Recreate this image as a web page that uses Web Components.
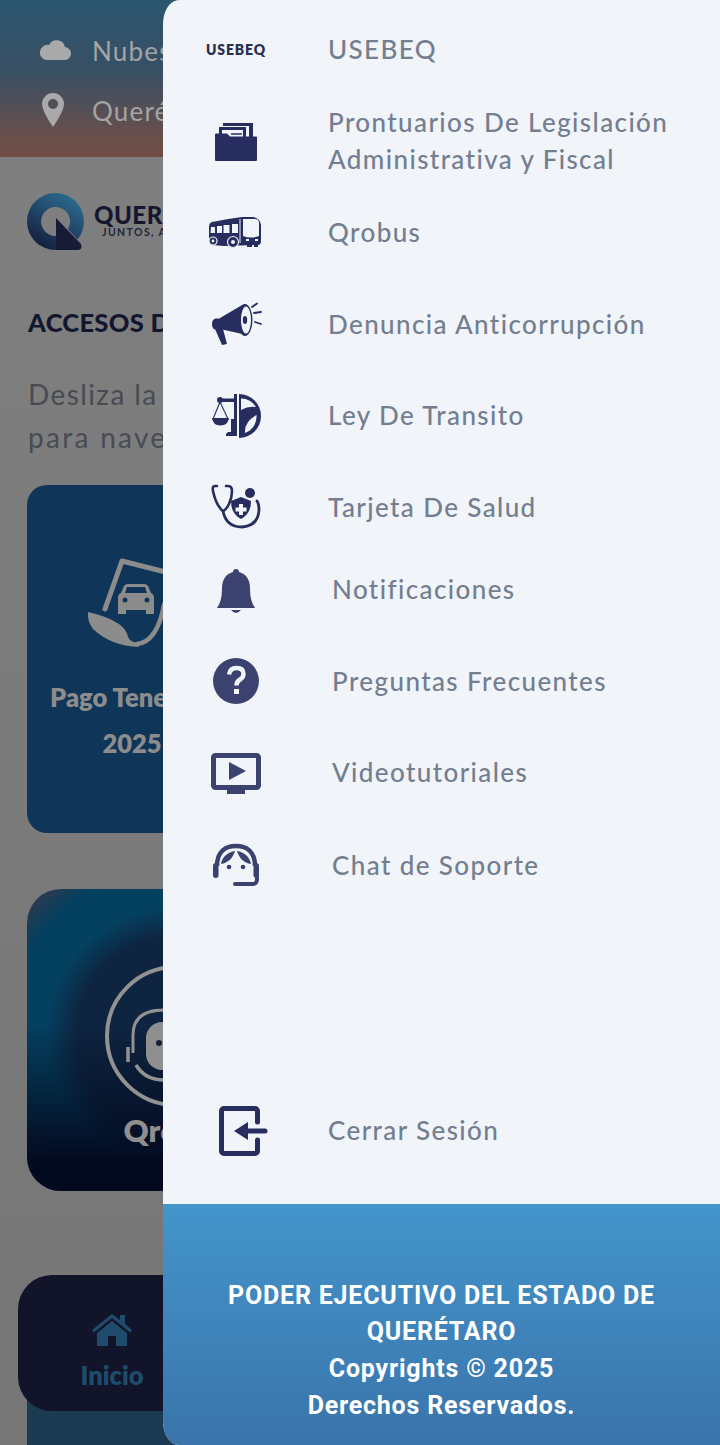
<!DOCTYPE html>
<html lang="es"><head><meta charset="utf-8"><title>Menú</title>
<style>
html,body{margin:0;padding:0}
body{width:720px;height:1445px;overflow:hidden;font-family:"Lato","Noto Sans",sans-serif;background:#7a7a7a}
</style></head><body>
<app-shell>
  <back-page></back-page>
  <side-drawer></side-drawer>
</app-shell>
<script>
const C1='#272e5f',C2='#3b4270',BG='#f1f4f9';
const icons={
folder:`<path d="M17 12h30v22h-4V15H21v5h-4z" fill="${C1}"/><path d="M12 15h28v14H12z" fill="${BG}"/><path d="M13 16h27v15h-3V19H16v4h-3z" fill="${C1}"/><path d="M25 23h11M26 27h9" stroke="${C1}" stroke-width="1.4"/><path d="M10 22.500h11l3 3h26a1 1 0 0 1 1 1V49a1 1 0 0 1-1 1H10a1 1 0 0 1-1-1V23.500a1 1 0 0 1 1-1z" fill="${C1}"/>`,
bus:`<path d="M6 19 Q20 16 36 14 L47 14 Q54 15 55 22 L55 38 Q55 42 52 42 L18 43 L6 42 Q3 41 3 38 L3 24 Q3 20 6 19z" fill="${C1}"/><path d="M5 24h4v6H4.500zM11 23h5v7h-5zM17.500 22h6v8h-6zM26 21h6v9h-6z" fill="${BG}"/><path d="M37 16h12q4 0 4 4v13q-8 3-16 0z" fill="${BG}"/><path d="M34 16v24" stroke="${BG}" stroke-width="1"/><circle cx="7" cy="38" r="4" fill="${C1}" stroke="${BG}" stroke-width="1.200"/><circle cx="7" cy="38" r="1.400" fill="${BG}"/><circle cx="27" cy="39" r="5.500" fill="${C1}" stroke="${BG}" stroke-width="1.200"/><circle cx="27" cy="39" r="2" fill="${BG}"/><path d="M40 36h3v2h-3zM49 36h3v2h-3z" fill="${BG}"/><path d="M41 42h5v2h-5zM48 42h4v2h-4z" fill="${C1}"/>`,
mega:`<path d="M14 24 L37 10.500 L41 41 L14 35z" fill="${C1}"/><path d="M6 30q0-5 4-5.500h4v11h-4q-4 0-4-5.500z" fill="${C1}"/><path d="M9 35h8l4 15-5 1z" fill="${C1}"/><ellipse cx="39" cy="26" rx="7.500" ry="16" fill="${C1}"/><ellipse cx="40" cy="26" rx="5" ry="13.500" fill="${BG}"/><ellipse cx="39" cy="26" rx="2.200" ry="4" fill="${C1}"/><path d="M46 13l5-3.500M48 19l7-1M49 28l6 2" stroke="${C1}" stroke-width="1.800" stroke-linecap="round"/>`,
ley:`<path d="M33 8A22 22 0 0 1 33 52z" fill="${C1}"/><path d="M35 12.500A17.500 17.500 0 0 1 50 21Q42 20 35 24z" fill="${BG}"/><path d="M50.500 29A17.500 17.500 0 0 1 39 47Q38 36 50.500 29z" fill="${BG}"/><path d="M28 8h3v42H20v-2l2-2h3V33h3z" fill="${C1}"/><path d="M14 12.500h14v3.500H14z" fill="${C1}"/><circle cx="14" cy="14" r="3" fill="${C1}"/><path d="M14 16L7 33M14 16l8 17" stroke="${C1}" stroke-width="1.100" fill="none"/><path d="M6 32h17q-1 7.500-8.500 7.500T6 32z" fill="${C1}"/>`,
salud:`<path d="M11 9H9Q6 9 7 14q2 9 5 14 4 6 5 6 3-1 6-7 3-6 3-13 0-5-4-5h-2" fill="none" stroke="${C1}" stroke-width="2.600" stroke-linecap="round"/><path d="M17 34q3 16 19 16 16-1 17-17 0-6-2-9" fill="none" stroke="${C1}" stroke-width="2.800" stroke-linecap="round"/><circle cx="44" cy="16" r="5" fill="${C1}"/><path d="M35 20l10 4q0 13-10 18-10-5-10-18z" fill="${C1}"/><path d="M33 27h4v3.500h3.500v4H37V38h-4v-3.500h-3.500v-4H33z" fill="${BG}"/>`,
bell:`<path d="M30 9a3 3 0 0 1 3 3q11 3 11 17 0 12 5 19H11q5-7 5-19 0-14 11-17a3 3 0 0 1 3-3z" fill="${C2}"/><path d="M25 50h10q-5 6-10 0z" fill="${C2}"/>`,
help:`<circle cx="30" cy="30" r="23" fill="${C2}"/><path d="M23 23.500q1-6.500 7.500-6.500 7 0 7 6 0 3.500-3.500 5.500-3.500 2-3.500 6" fill="none" stroke="${BG}" stroke-width="4.500"/><rect x="28" y="38" width="5" height="5" fill="${BG}"/>`,
video:`<rect x="7.500" y="12.500" width="45" height="32" rx="2" fill="none" stroke="${C2}" stroke-width="5"/><path d="M21 46h18v5H21z" fill="${C2}"/><path d="M23 19l17 9-17 9z" fill="${C2}"/>`,
chat:`<path d="M11 30C11 15 20 10 30 10s19 5 19 20" fill="none" stroke="${C2}" stroke-width="4.500"/><path d="M29 15C22 16 16 21 15 28 22 27 27 22 29 15zM31 15C38 16 44 21 45 28 38 27 33 22 31 15z" fill="${C2}"/><rect x="7" y="27" width="5.500" height="15" rx="2.700" fill="${C2}"/><rect x="47.500" y="27" width="5.500" height="15" rx="2.700" fill="${C2}"/><path d="M51 42v2a4 4 0 0 1-4 4H29" fill="none" stroke="${C2}" stroke-width="4" stroke-linecap="round"/><circle cx="23" cy="31" r="2.300" fill="${C2}"/><circle cx="37" cy="31" r="2.300" fill="${C2}"/>`,
exit:`<path d="M51.500 21V10a2.500 2.500 0 0 0-2.500-2.500H18A2.500 2.500 0 0 0 15.500 10v40a2.500 2.500 0 0 0 2.500 2.500h31a2.500 2.500 0 0 0 2.500-2.500V39" fill="none" stroke="${C1}" stroke-width="5" stroke-linecap="round"/><path d="M40 30h19" stroke="${C1}" stroke-width="5" stroke-linecap="round"/><path d="M28 30l14-9v18z" fill="${C1}"/>`
};
class MenuRow extends HTMLElement{
  connectedCallback(){
    const s=this.attachShadow({mode:'open'});
    const i=this.getAttribute('icon');
    s.innerHTML=`<style>
:host{display:flex;align-items:center;height:72px;padding-left:43px;color:#737e90;font:500 26px/37px "Lato","Noto Sans",sans-serif;letter-spacing:1.4px}
.ic{flex:none;width:60px;height:60px;display:flex;align-items:center;justify-content:center;margin-right:var(--text-gap,62px);font:800 14px "Lato",sans-serif;color:#2a3050;letter-spacing:.9px}
svg{display:block;width:60px;height:60px;overflow:visible}
.t{white-space:pre-line}
</style><div class="ic">${i==='logo'?'USEBEQ':`<svg viewBox="0 0 60 60">${icons[i]}</svg>`}</div><div class="t"><slot></slot></div>`;
  }
}
customElements.define('menu-row',MenuRow);
class SideDrawer extends HTMLElement{
  connectedCallback(){
    const s=this.attachShadow({mode:'open'});
    s.innerHTML=`<style>
:host{position:absolute;z-index:2;left:163px;top:0;width:557px;height:1445px;display:flex;flex-direction:column;background:${BG};border-radius:16px 0 0 16px / 24px 0 0 24px;overflow:hidden}
nav{display:flex;flex-direction:column;gap:19.500px;padding-top:13.500px}
.b{display:flex;flex-direction:column;gap:19.500px;margin-top:10.500px;--text-gap:66px}
.out{margin-top:auto;margin-bottom:37.500px}
.chat{margin-top:1.500px}
footer{height:241px;box-sizing:border-box;padding-top:73.500px;background:linear-gradient(#4395cc,#3a74aa);color:#fff;text-align:center;font:700 25px/36.700px Roboto,sans-serif;letter-spacing:.8px}
</style>
<nav>
<menu-row icon="logo">USEBEQ</menu-row>
<menu-row icon="folder">Prontuarios De Legislación
Administrativa y Fiscal</menu-row>
<menu-row icon="bus">Qrobus</menu-row>
<menu-row icon="mega">Denuncia Anticorrupción</menu-row>
<menu-row icon="ley">Ley De Transito</menu-row>
<menu-row icon="salud">Tarjeta De Salud</menu-row>
</nav>
<div class="b">
<menu-row icon="bell">Notificaciones</menu-row>
<menu-row icon="help">Preguntas Frecuentes</menu-row>
<menu-row icon="video">Videotutoriales</menu-row>
<menu-row class="chat" icon="chat">Chat de Soporte</menu-row>
</div>
<menu-row class="out" icon="exit">Cerrar Sesión</menu-row>
<footer>PODER EJECUTIVO DEL ESTADO DE<br>QUERÉTARO<br>Copyrights © 2025<br>Derechos Reservados.</footer>`;
  }
}
customElements.define('side-drawer',SideDrawer);
class BackPage extends HTMLElement{
  connectedCallback(){
    const s=this.attachShadow({mode:'open'});
    s.innerHTML=`<style>
:host{display:block;height:1445px;overflow:hidden;background:linear-gradient(#808080,#767676);font-family:"Lato",sans-serif;position:relative;z-index:0}
header{height:157px;box-sizing:border-box;padding-top:21px;background:linear-gradient(#2a566f 0%,#384f64 45%,#6a4f4b 88%,#734d45 100%);color:#a4a4a4;font-size:26px;letter-spacing:1.2px}
header div{display:flex;align-items:center;height:60px;padding-left:38px;gap:21px}
header svg{width:33px;height:40px;flex:none}
.logo{display:flex;align-items:center;gap:10px;margin:36px 0 0 27px;height:57px}
.logo svg{width:57px;height:57px;flex:none}
.logo>div{padding-bottom:3px}
.ln{color:#14172f;font:900 24px/23px "Lato",sans-serif;letter-spacing:.5px}
.tag{color:#22253c;font:700 10.500px/10px "Lato",sans-serif;letter-spacing:1.400px;margin:1px 0 0 8px}
h2{margin:57px 0 0 28px;font:900 25.500px/30px "Lato",sans-serif;letter-spacing:.3px;color:#13162f;white-space:nowrap}
p{margin:36px 0 0 28px;font:400 28px/43px "Lato",sans-serif;color:#484b53;letter-spacing:1.400px}
p span{letter-spacing:2.300px}
.c1{margin:26px 0 0 27px;width:210px;height:348px;border-radius:20px;background:#0f3558;color:#8c8c8c;text-align:center;font:800 25.500px/46px "Lato",sans-serif;box-sizing:border-box;padding-top:70px}
.c1 svg{display:block;width:100px;height:96px;margin:0 auto 23px 54px}
.c2{margin:56px 0 0 27px;width:297px;height:302px;border-radius:34px;box-sizing:border-box;padding-top:76px;text-align:center;color:#8f8f8f;font:800 31px/36px "Lato",sans-serif;
 background:radial-gradient(circle at 148px 147px,#0e2440 0 98px,#04405f 128px,#04405f 168px,#2b3a50 195px);position:relative;overflow:hidden}
.c2::after{content:"";position:absolute;inset:0;background:linear-gradient(transparent 45%,#030a20 90%)}
.c2 svg{display:block;width:142px;height:142px;margin:0 auto 5px}
.c2 span,.c2 svg{position:relative;z-index:1}
.c3{margin:87px 0 0 27px;width:500px;height:200px;border-radius:20px;background:linear-gradient(#14284a,#1c3a52 60%)}
.nav{position:absolute;left:18px;top:1275px;width:400px;height:136px;border-radius:34px;background:#12142a;color:#1f4c6c;font:800 25.500px/30px "Lato",sans-serif}
.nav div{width:188px;text-align:center;padding-top:36px}
.nav svg{display:block;width:42px;height:36px;margin:0 auto 13px}
</style>
<header>
<div><svg viewBox="0 0 33 40"><path d="M8 29h18a6.500 6.500 0 0 0 1-13 8.500 8.500 0 0 0-16-2 7.500 7.500 0 0 0-3 15z" fill="#a9a9a9"/></svg><span>Nubes</span></div>
<div><svg viewBox="0 0 33 40"><path fill-rule="evenodd" d="M15 2a11 11 0 0 1 11 11q0 7-11 23Q4 20 4 13A11 11 0 0 1 15 2zm0 6a5 5 0 1 0 0 10 5 5 0 0 0 0-10z" fill="#a9a9a9"/></svg><span>Querétaro</span></div>
</header>
<div class="logo"><svg viewBox="0 0 57 57"><defs><linearGradient id="g" x1=".8" y1="0" x2=".2" y2="1"><stop offset="0" stop-color="#2c6f93"/><stop offset="1" stop-color="#141b3a"/></linearGradient></defs><path d="M28.500 0a28.500 28.500 0 0 1 22 46.500L41 36a14.500 14.500 0 1 0-12 7l7 14h-7.500A28.500 28.500 0 0 1 28.500 0z" fill="url(#g)"/><path d="M29 25l25 26q2 6-4 6H29z" fill="#171b38"/></svg><div><div class="ln">QUERÉTARO</div><div class="tag">JUNTOS, ADELANTE</div></div></div>
<h2>ACCESOS DIRECTOS</h2>
<p>Desliza la pantalla<br><span>para navegar</span></p>
<div class="c1"><svg viewBox="0 0 100 96"><path d="M24 54L41 6l79 20" fill="none" stroke="#8c8c8c" stroke-width="5" stroke-linecap="round" stroke-linejoin="round"/><path d="M56 89Q76 87 83 50L95 25" fill="none" stroke="#8c8c8c" stroke-width="4.500"/><path d="M7 57Q26 61 38 69 46 75 47 82 50 88 56 87L58 92Q30 91 12 74 6 66 7 57z" fill="#8c8c8c"/><path d="M40 38l3-7q1-2 4-2h16q3 0 4 2l3 7q3 1 3 5v16h-8v-4H45v4h-8V43q0-4 3-5z" fill="#8c8c8c"/><path d="M44 38l2-6h18l2 6z" fill="#0f3558"/><circle cx="44" cy="45" r="2.500" fill="#0f3558"/><circle cx="66" cy="45" r="2.500" fill="#0f3558"/></svg>Pago Tenencia<br>2025</div>
<div class="c2"><svg viewBox="0 0 142 142"><circle cx="71" cy="71" r="69" fill="none" stroke="#929292" stroke-width="4"/><path d="M28 88V70Q28 45 59 45H80" fill="none" stroke="#929292" stroke-width="3"/><path d="M23 82v15M31 100Q40 115 59 115H80" fill="none" stroke="#929292" stroke-width="3.500"/><rect x="41" y="57" width="60" height="48" rx="16" fill="#8f8f8f"/><circle cx="54" cy="78" r="3" fill="#14203a"/></svg><span>Qrobus</span></div>
<div class="c3"></div>
<div class="nav"><div><svg viewBox="0 0 42 36"><path d="M21 3L1 19l2 2.500 18-14.500 18 14.500 2-2.500-7-6V4h-5v5z" fill="#1f4c6c"/><path d="M21 10L6 22v13h11V25h8v10h11V22z" fill="#1f4c6c"/></svg>Inicio</div></div>
`;
  }
}
customElements.define('back-page',BackPage);
class AppShell extends HTMLElement{
  connectedCallback(){
    if(!this.shadowRoot){const s=this.attachShadow({mode:'open'});
    s.innerHTML=`<style>:host{display:block;position:relative;width:720px;height:1445px;overflow:hidden}</style><slot></slot>`;}
  }
}
customElements.define('app-shell',AppShell);
</script>
</body></html>
